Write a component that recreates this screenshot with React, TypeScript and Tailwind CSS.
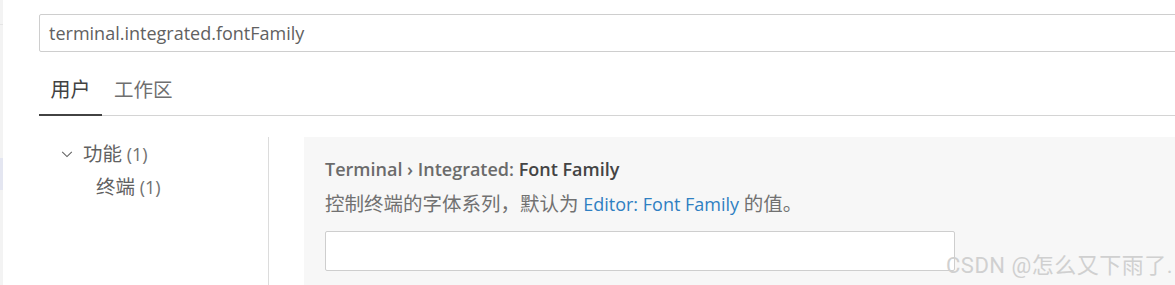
import React from 'react'

const font = { fontFamily: '"Open Sans", "Noto Sans CJK SC", sans-serif' }

export default function App() {
    return (
        <div className="w-[1175px] h-[285px] bg-white overflow-hidden flex relative" style={font}>
            {/* activity strip at the far left */}
            <div className="w-[3px] h-full bg-[#f3f3f3] flex flex-col">
                <div className="h-[25px] border-b border-[#e5e5e5]"></div>
                <div className="h-[133px]"></div>
                <div className="h-[32px] bg-[#e4e6f1]"></div>
            </div>

            <div className="flex-1 pl-[36px] flex flex-col">
                <div className="mt-[14px] h-[38px] -mr-[4px] border border-[#cecece] rounded-[2px] flex items-center pl-[9px] text-[18px] text-[#616161]">
                    terminal.integrated.fontFamily
                </div>

                <div className="h-[64px] flex items-end border-b border-[#d4d4d4]">
                    <div className="w-[63px] h-[50px] flex items-center justify-center text-[20px] text-[#424242] border-b-2 border-[#424242] -mb-[1px]">用户</div>
                    <div className="pl-[12px] h-[50px] flex items-center text-[19.5px] text-[#6f6f6f]">工作区</div>
                </div>

                <div className="flex flex-1 pt-[21px]">
                    <div className="w-[230px] border-r border-[#dcdcdc] flex flex-col text-[18px] text-[#616161]">
                        <div className="flex items-center h-[33px] pl-[21px]">
                            <svg width="14" height="14" viewBox="0 0 16 16" className="mr-[9px]">
                                <path d="M2.5 5.5 L8 11 L13.5 5.5" fill="none" stroke="#616161" strokeWidth="1.2" />
                            </svg>
                            <span><span className="text-[19.5px]">功能</span> <span className="text-[#717171]">(1)</span></span>
                        </div>
                        <div className="flex items-center h-[33px] pl-[57px]">
                            <span><span className="text-[19.5px]">终端</span> <span className="text-[#717171]">(1)</span></span>
                        </div>
                    </div>

                    <div className="ml-[35px] flex-1 bg-[#f7f7f7] pl-[21px] pt-[20px]">
                        <div className="text-[18px] font-semibold text-[#6b6b6b] leading-[24px]">
                            Terminal › Integrated: <span className="text-[#444444]">Font Family</span>
                        </div>
                        <div className="mt-[11px] text-[18px] text-[#717171] leading-[24px]">
                            <span className="text-[19.5px]">控制终端的字体系列，默认为</span> <span className="text-[#2f80c2]">Editor: Font Family</span> <span className="text-[19.5px]">的值。</span>
                        </div>
                        <div className="mt-[15px] w-[630px] h-[40px] bg-white border border-[#cecece] rounded-[2px]"></div>
                    </div>
                </div>
            </div>

            <div className="absolute left-[946px] top-[249px] text-[22px] text-[#d0d0d0] tracking-[0.5px]" style={{ fontFamily: 'Roboto, "Noto Sans CJK SC", sans-serif' }}>
                CSDN @怎么又下雨了.
            </div>
        </div>
    )
}
